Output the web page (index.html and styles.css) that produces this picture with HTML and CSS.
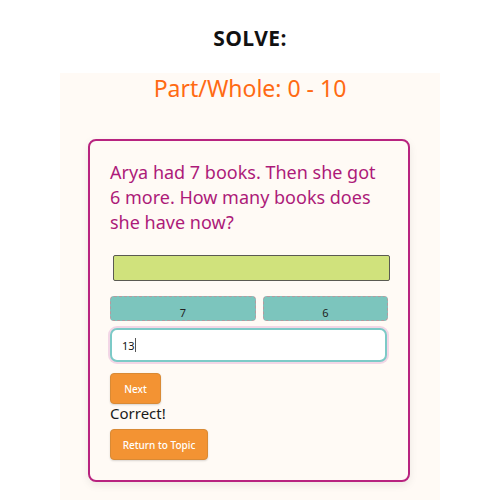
FILE: index.html
```html
<!DOCTYPE html>
<html>
<head>
<meta charset="utf-8">
<link rel="stylesheet" href="styles.css">
</head>
<body>
<h1 class="heading">SOLVE:</h1>
<div class="panel">
  <h2 class="topic">Part/Whole: 0 - 10</h2>
  <div class="card">
    <p class="question">Arya had 7 books. Then she got 6 more. How many books does she have now?</p>
    <div class="whole"></div>
    <div class="parts">
      <div class="part part-a">7</div>
      <div class="part part-b">6</div>
    </div>
    <div class="answer"><span class="answer-text">13</span><span class="caret"></span></div>
    <button class="btn btn-next">Next</button>
    <div class="feedback">Correct!</div>
    <button class="btn btn-return">Return to Topic</button>
  </div>
</div>
</body>
</html>
```
FILE: styles.css
```css
html, body {
  margin: 0;
  padding: 0;
  background: #ffffff;
  font-family: "Noto Sans", "Open Sans", sans-serif;
}
.heading {
  margin: 0;
  padding-top: 26px;
  height: 47px;
  box-sizing: border-box;
  text-align: center;
  font-size: 21px;
  font-weight: 700;
  line-height: 24px;
  letter-spacing: 0.3px;
  color: #111;
  font-family: "Open Sans", sans-serif;
}
.panel {
  width: 380px;
  margin: 26px auto 0;
  background: #fffaf5;
  padding-top: 1px;
  padding-bottom: 19px;
}
.topic {
  margin: 0;
  text-align: center;
  font-size: 23px;
  font-weight: 400;
  line-height: 28px;
  color: #ff6a13;
}
.card {
  margin: 37px 0 0 28px;
  width: 322px;
  box-sizing: border-box;
  border: 2px solid #b8237f;
  border-radius: 8px;
  padding: 19px 20px 20px 20px;
  box-shadow: 0 3px 8px rgba(0,0,0,0.08);
}
.question {
  margin: 0;
  font-size: 18px;
  line-height: 25px;
  color: #ad1a79;
  padding-right: 10px;
}
.whole {
  margin: 20px 0 0 3px;
  width: 277px;
  height: 26px;
  box-sizing: border-box;
  background: #d0e27c;
  border: 1px solid #5a5a52;
  border-radius: 2px;
}
.parts {
  display: flex;
  gap: 7px;
  margin-top: 15px;
}
.part {
  height: 25px;
  box-sizing: border-box;
  background: #7cc5bd;
  border: 1px dashed #b59aa0;
  border-radius: 4px;
  font-size: 11px;
  color: #222;
  text-align: center;
  padding-top: 9px;
  line-height: 14px;
}
.part-a { width: 146px; }
.part-b { width: 125px; }
.answer {
  margin-top: 7px;
  width: 277px;
  height: 34px;
  box-sizing: border-box;
  background: #fff;
  border: 2px solid #7ccac7;
  border-radius: 7px;
  box-shadow: 0 0 0 2px #f3d6e6;
  display: flex;
  align-items: center;
  padding-left: 10px;
  font-size: 11px;
  color: #111;
}
.caret {
  display: inline-block;
  width: 1px;
  height: 14px;
  background: #555;
}
.btn {
  display: block;
  border: 1px solid #d98a35;
  background: #f39333;
  color: #fff;
  font-family: "Noto Sans", sans-serif;
  font-size: 10px;
  font-weight: 500;
  border-radius: 4px;
  padding: 0;
  box-shadow: 0 1px 2px rgba(0,0,0,0.15);
}
.btn-next {
  margin-top: 11px;
  width: 51px;
  height: 31px;
}
.feedback {
  font-size: 15px;
  line-height: 18px;
  color: #1a1a1a;
}
.btn-return {
  margin-top: 7px;
  width: 98px;
  height: 31px;
}
```
